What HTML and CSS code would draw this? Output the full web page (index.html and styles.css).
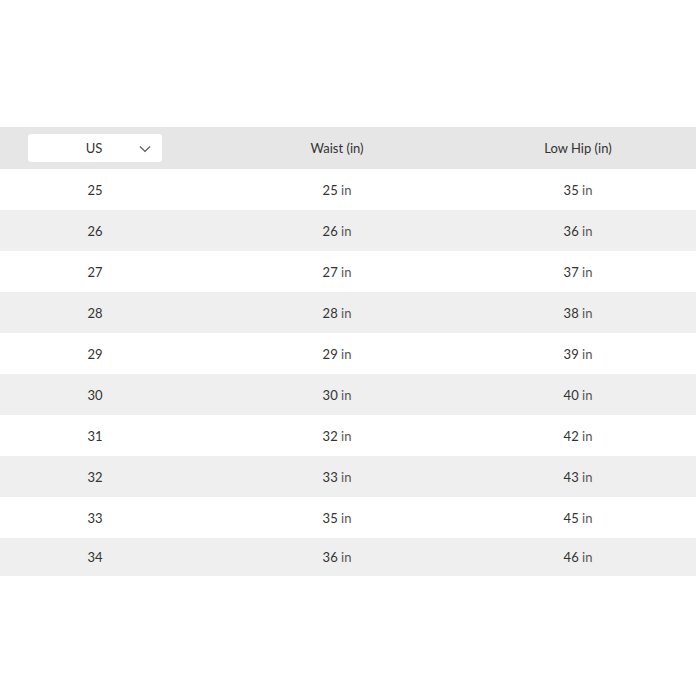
FILE: index.html
```html
<!DOCTYPE html>
<html>
<head>
<meta charset="utf-8">
<link rel="stylesheet" href="styles.css">
</head>
<body>
<div class="table">
  <div class="row head">
    <div class="cell"><div class="select"><span>US</span><svg class="chev" width="12" height="8" viewBox="0 0 12 8"><path d="M1 1.5 L6 6.5 L11 1.5" fill="none" stroke="#555" stroke-width="1.1"/></svg></div></div>
    <div class="cell">Waist (in)</div>
    <div class="cell">Low Hip (in)</div>
  </div>
  <div class="row"><div class="cell">25</div><div class="cell">25 <span class="u">in</span></div><div class="cell">35 <span class="u">in</span></div></div>
  <div class="row alt"><div class="cell">26</div><div class="cell">26 <span class="u">in</span></div><div class="cell">36 <span class="u">in</span></div></div>
  <div class="row"><div class="cell">27</div><div class="cell">27 <span class="u">in</span></div><div class="cell">37 <span class="u">in</span></div></div>
  <div class="row alt"><div class="cell">28</div><div class="cell">28 <span class="u">in</span></div><div class="cell">38 <span class="u">in</span></div></div>
  <div class="row"><div class="cell">29</div><div class="cell">29 <span class="u">in</span></div><div class="cell">39 <span class="u">in</span></div></div>
  <div class="row alt"><div class="cell">30</div><div class="cell">30 <span class="u">in</span></div><div class="cell">40 <span class="u">in</span></div></div>
  <div class="row"><div class="cell">31</div><div class="cell">32 <span class="u">in</span></div><div class="cell">42 <span class="u">in</span></div></div>
  <div class="row alt"><div class="cell">32</div><div class="cell">33 <span class="u">in</span></div><div class="cell">43 <span class="u">in</span></div></div>
  <div class="row"><div class="cell">33</div><div class="cell">35 <span class="u">in</span></div><div class="cell">45 <span class="u">in</span></div></div>
  <div class="row alt last"><div class="cell">34</div><div class="cell">36 <span class="u">in</span></div><div class="cell">46 <span class="u">in</span></div></div>
</div>
</body>
</html>
```
FILE: styles.css
```css
html, body { margin: 0; padding: 0; background: #fff; }
body {
  font-family: Lato, "Open Sans", sans-serif;
  font-size: 13px;
  color: #333;
  padding-top: 127px;
}
.table { width: 696px; }
.row {
  display: grid;
  grid-template-columns: 190px 294px 188px;
  height: 41px;
  align-items: center;
}
.row.head { height: 42px; background: #e6e6e6; }
.row.alt { background: #efefef; }
.row.last { height: 38px; }
.cell { text-align: center; }
.u { color: #555; }
.select {
  margin-left: 28px;
  width: 134px;
  height: 28px;
  background: #fff;
  border-radius: 3px;
  position: relative;
  display: flex;
  align-items: center;
  justify-content: center;
  box-sizing: border-box;
  padding-left: 0;
}
.select span { margin-left: -2px; }
.chev { position: absolute; right: 11px; top: 11px; }
```
